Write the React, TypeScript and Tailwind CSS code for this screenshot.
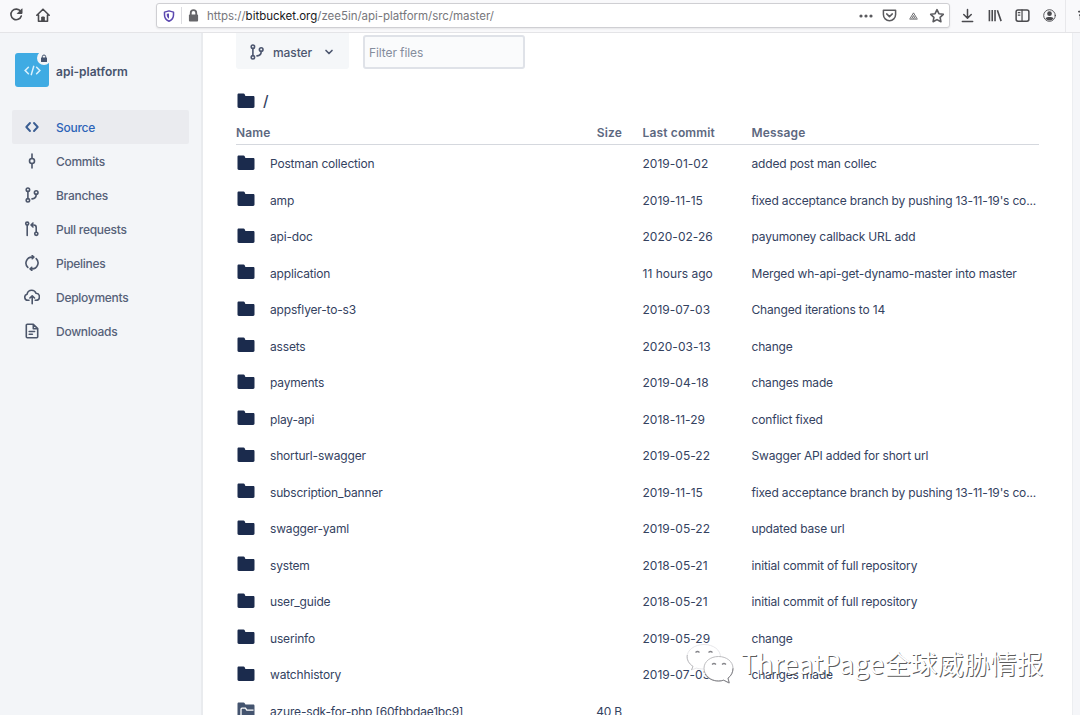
import type { ReactNode } from "react";

type IconProps = { children: ReactNode; className?: string; box?: string };

function Icon({ children, className = "size-4", box = "0 0 16 16" }: IconProps) {
  return (
    <svg
      viewBox={box}
      className={`shrink-0 ${className}`}
      fill="none"
      stroke="currentColor"
      strokeWidth="1.6"
      strokeLinecap="round"
      strokeLinejoin="round"
    >
      {children}
    </svg>
  );
}

const branchShape = (
  <>
    <circle cx="3.9" cy="2.7" r="1.7" />
    <circle cx="3.9" cy="13.3" r="1.7" />
    <circle cx="12.2" cy="5.6" r="1.8" />
    <path d="M3.9 4.6v6.8M12.2 7.4c0 3-1.2 4.200-4.200 4.500" />
  </>
);

const navItems: { label: string; icon: ReactNode; active?: boolean }[] = [
  {
    label: "Source",
    active: true,
    icon: <path d="M6 4 2.3 8 6 12M10 4l3.700 4L10 12" strokeWidth="1.9" />,
  },
  {
    label: "Commits",
    icon: (
      <>
        <circle cx="8" cy="8" r="2.500" />
        <path d="M8 1v4.500M8 10.500V15" />
      </>
    ),
  },
  { label: "Branches", icon: branchShape },
  {
    label: "Pull requests",
    icon: (
      <>
        <circle cx="3.200" cy="2.600" r="1.500" />
        <path d="M3.200 4.400v10.100M7.300 4h2.500c1.600 0 2.400.8 2.400 2.400v4.800M9 2 7 4l2 2" />
        <circle cx="12.300" cy="12.800" r="1.600" />
      </>
    ),
  },
  {
    label: "Pipelines",
    icon: (
      <>
        <path d="M9.500 2.100H8A6 6 0 0 0 3.800 12.400M6.500 13.900H8A6 6 0 0 0 12.200 3.600" />
        <path d="M8.200.6 9.800 2.100 8.200 3.700M7.800 12.300 6.200 13.900l1.600 1.500" />
      </>
    ),
  },
  {
    label: "Deployments",
    icon: (
      <path d="M5 11.300H3.800a3.100 3.100 0 0 1-.7-6.100C3.600 2.700 5.300 1.300 7.700 1.300c2.100 0 3.600 1.100 4.300 3 2.200.1 3.400 1.600 3.400 3.500 0 2.200-1.500 3.500-3.400 3.500h-.8M8.200 14.700V7M5.900 9 8.200 6.800 10.500 9" />
    ),
  },
  {
    label: "Downloads",
    icon: (
      <path d="M9.300 1.200H3.300a1 1 0 0 0-1 1v11.600a1 1 0 0 0 1 1h9.400a1 1 0 0 0 1-1V5.600zM9.300 1.500v4.200h4.200M5.200 8.500h5.400M5.200 11.300h3.200" />
    ),
  },
];

const files = [
  ["Postman collection", "2019-01-02", "added post man collec"],
  ["amp", "2019-11-15", "fixed acceptance branch by pushing 13-11-19's co..."],
  ["api-doc", "2020-02-26", "payumoney callback URL add"],
  ["application", "11 hours ago", "Merged wh-api-get-dynamo-master into master"],
  ["appsflyer-to-s3", "2019-07-03", "Changed iterations to 14"],
  ["assets", "2020-03-13", "change"],
  ["payments", "2019-04-18", "changes made"],
  ["play-api", "2018-11-29", "conflict fixed"],
  ["shorturl-swagger", "2019-05-22", "Swagger API added for short url"],
  ["subscription_banner", "2019-11-15", "fixed acceptance branch by pushing 13-11-19's co..."],
  ["swagger-yaml", "2019-05-22", "updated base url"],
  ["system", "2018-05-21", "initial commit of full repository"],
  ["user_guide", "2018-05-21", "initial commit of full repository"],
  ["userinfo", "2019-05-29", "change"],
  ["watchhistory", "2019-07-03", "changes made"],
];

function Folder() {
  return (
    <svg viewBox="0 0 18 16" className="h-4 w-[18px] shrink-0" fill="#1b2b4d">
      <path d="M.5 1.900C.5 1 1 .5 1.900.5h4.600c.6 0 1 .3 1.200.8l.7 1.700h7.700c.9 0 1.400.5 1.400 1.400v9.200c0 .9-.5 1.400-1.400 1.400H1.900C1 15 .5 14.500.5 13.600z" />
    </svg>
  );
}

function Submodule() {
  return (
    <svg viewBox="0 0 18 16" className="h-4 w-[18px] shrink-0" fill="#44546f">
      <path d="M.5 1.900C.5 1 1 .5 1.900.5h4.600c.6 0 1 .3 1.200.8l.7 1.200h7.700c.9 0 1.400.5 1.400 1.400v9.700c0 .9-.5 1.400-1.400 1.400H1.900C1 15 .5 14.500.5 13.600z" />
      <path d="M4 13V7.200c0-.7.300-1 1-1h3.500l1.300 2h6.700" fill="none" stroke="#fff" strokeWidth="1.300" />
    </svg>
  );
}

function BrowserBar() {
  return (
    <header className="flex h-[33px] shrink-0 items-start border-b border-[#e4e4e7] bg-[#f9f9fb] text-[#4a4a4e]">
      <div className="flex w-[156px] shrink-0 gap-[11px] pt-[7px] pl-2">
        <Icon className="size-4">
          <path d="M12.600 4.400A5.300 5.300 0 1 0 13.300 9" strokeWidth="1.600" />
          <path d="M14 2.200v4.300H9.700z" fill="currentColor" strokeWidth="1" />
        </Icon>
        <Icon className="size-4">
          <path d="M1.800 8.200 8 2.200l6.200 6M3.500 8v6.300h9V8" strokeWidth="1.600" />
          <path d="M6.700 14v-4h2.600v4z" fill="currentColor" strokeWidth="1" />
        </Icon>
      </div>
      <div className="mt-[3px] flex h-[25px] w-[794px] shrink-0 items-center rounded-[3px] border border-[#cfcfd3] bg-white shadow-[0_1px_2px_rgba(0,0,0,0.08)]">
        <Icon className="ml-[6px] size-[12px] text-[#5b48b0]">
          <path d="M8 1.200 14 2.800v4c0 4-2.300 6.700-6 8.200-3.700-1.500-6-4.200-6-8.200v-4z" strokeWidth="2" />
          <path d="M8 4.500v7c-2-1.300-3-3-3-5V5z" fill="currentColor" stroke="none" />
        </Icon>
        <span className="ml-[6px] h-[17px] w-px bg-[#dcdce0]" />
        <svg viewBox="0 0 12 14" className="ml-[6px] h-[13px] w-[11px] shrink-0">
          <path d="M3 7V4.200a3 3 0 0 1 6 0V7" fill="none" stroke="#66666a" strokeWidth="2" />
          <rect x="1" y="6" width="10" height="7.500" rx="1" fill="#66666a" />
        </svg>
        <span className="ml-[8px] flex-1 pt-[2px] text-[11.5px] tracking-[-0.02px] whitespace-nowrap text-[#77777c]">
          https://<span className="text-[#18181b]">bitbucket.org</span>/zee5in/api-platform/src/master/
        </span>
        <div className="flex items-center pr-[4px] text-[#5a5a5e]">
          <svg viewBox="0 0 14 4" className="h-1 w-[14px]" fill="currentColor">
            <circle cx="2" cy="2" r="1.600" />
            <circle cx="7" cy="2" r="1.600" />
            <circle cx="12" cy="2" r="1.600" />
          </svg>
          <Icon className="ml-[9px] size-[15px]">
            <path d="M1.500 2.500h13V7a6.500 6.500 0 0 1-13 0zM5 6.300l3 2.900 3-2.900" />
          </Icon>
          <svg viewBox="0 0 10 9" className="ml-[12px] h-[8px] w-[9px]" fill="none" stroke="currentColor">
            <path d="M1 7.500 5 1l4 6.500M3 7.500 5 4l2 3.500M5 6.500v1M0.500 8h9" strokeWidth="1" />
          </svg>
          <Icon className="ml-[11px] size-[16px]">
            <path d="m8 1.700 1.900 4 4.400.6-3.200 3 .8 4.400L8 11.600l-3.900 2.100.8-4.400-3.200-3 4.400-.6z" />
          </Icon>
        </div>
      </div>
      <div className="flex flex-1 items-start pt-[8px] pl-[10px]">
        <Icon className="size-[15px]">
          <path d="M8 1.500v9M4 7l4 4 4-4M2.500 14.300h11" strokeWidth="1.600" />
        </Icon>
        <Icon className="ml-[13px] size-[15px]">
          <path d="M1.500 2v12M4.500 2v12M7.500 2v12M10 2.500l4 11.500" strokeWidth="1.700" strokeLinecap="butt" />
        </Icon>
        <Icon className="ml-[12px] size-[15px]">
          <rect x="1.200" y="2" width="13.600" height="12" rx="2" />
          <path d="M7.500 2v12M3.500 5h1.700M3.500 7.500h1.700" strokeWidth="1.300" />
        </Icon>
        <Icon className="ml-[12px] size-[15px]">
          <circle cx="8" cy="8" r="6.200" strokeWidth="1" />
          <circle cx="8" cy="6" r="2.500" fill="currentColor" stroke="none" />
          <path d="M3.800 11.200c1-2 7.400-2 8.400 0-1.800 2.800-6.600 2.800-8.400 0z" fill="currentColor" stroke="none" />
        </Icon>
        <span className="-mt-[8px] ml-[8px] h-[32px] w-px bg-[#e8e8eb]" />
        <Icon className="ml-[12px] size-[14px]">
          <path d="M1 4h6M2 8h5M3 8v5" strokeWidth="2" />
        </Icon>
      </div>
    </header>
  );
}

function Sidebar() {
  return (
    <aside className="w-[203px] shrink-0 border-r-2 border-[#e9ebee] bg-[#f3f5f8] pt-[20px] pl-3">
      <div className="flex items-center pl-[3px]">
        <div className="relative flex h-[34px] w-[34px] items-center justify-center rounded-[3px] bg-[#3fabe3]">
          <svg viewBox="0 0 20 12" className="h-[11px] w-[19px]" fill="none" stroke="#d9f1fd" strokeWidth="1.700" strokeLinecap="round">
            <path d="M5.500 2.500 2 6l3.500 3.500M14.500 2.500 18 6l-3.500 3.500M11.300 1.500 8.700 10.500" />
          </svg>
          <span className="absolute -top-[2px] -right-[2px] flex size-[14px] items-center justify-center rounded-full bg-[#f3f5f8]">
            <svg viewBox="0 0 8 9" className="h-[9px] w-[8px]">
              <path d="M2.300 4.500V2.700a1.700 1.700 0 0 1 3.400 0v1.800" fill="none" stroke="#44546f" />
              <rect x="1" y="3.500" width="6" height="4.500" rx=".6" fill="#44546f" />
            </svg>
          </span>
        </div>
        <h1 className="ml-[7px] pt-[3px] text-[12px] font-semibold text-[#47536d]">api-platform</h1>
      </div>
      <nav className="mt-[23px] w-[177px]">
        {navItems.map(({ label, icon, active }) => (
          <a
            key={label}
            className={`flex h-[34px] items-center pl-[12px] text-[12px] font-medium tracking-[-0.28px] ${
              active ? "rounded-[2px] bg-[#eaebef] text-[#2c63b8]" : "text-[#566178]"
            }`}
          >
            <Icon className={`size-4 ${active ? "text-[#3a5d92]" : "text-[#4c566b]"}`}>{icon}</Icon>
            <span className="ml-[16px] pt-[2px]">{label}</span>
          </a>
        ))}
      </nav>
    </aside>
  );
}

const columns = "grid grid-cols-[34px_327px_25px_20.500px_109px_1fr]";

function FileTable() {
  return (
    <div className="w-[803px] text-[12px] tracking-[-0.17px] whitespace-nowrap text-[#34425f]">
      <div className={`${columns} h-[28px] items-center border-b border-[#d5d8de] pt-[5px] font-semibold tracking-[0.15px] text-[#5d6880]`}>
        <span className="col-span-2">Name</span>
        <span className="flex justify-end">Size</span>
        <span />
        <span>Last commit</span>
        <span>Message</span>
      </div>
      <div className="pt-[1px]">
        {files.map(([name, date, message]) => (
          <div key={name} className={`${columns} h-[36.5px] items-center`}>
            <span className="-mt-[3px] pl-[1px]">
              <Folder />
            </span>
            <span>{name}</span>
            <span />
            <span />
            <span className="tracking-[0.02px]">{date}</span>
            <span>{message}</span>
          </div>
        ))}
        <div className={`${columns} h-[36.5px] items-center`}>
          <span className="-mt-[3px] pl-[1px]">
            <Submodule />
          </span>
          <span>azure-sdk-for-php [60fbbdae1bc9]</span>
          <span className="flex justify-end">40 B</span>
        </div>
      </div>
    </div>
  );
}

function Watermark() {
  return (
    <div className="absolute top-[641px] left-[685px] flex items-center">
      <svg viewBox="0 0 50 44" className="h-[44px] w-[50px] shrink-0" fill="#fff" stroke="#b4b4b8" strokeWidth=".9">
        <path d="M19 3.500C9.500 3.500 2 9 2 16c0 4 2.400 7.300 6 9.400L6.500 29l4.800-1.900c2 .6 4.700.9 7.700.9 9 0 16.500-5 16.500-12S28.500 3.500 19 3.500z" stroke="#e4e4e8" />
        <path d="M2.300 14c-.8 4.500 1.800 8.900 5.700 11.400L6.500 29" fill="none" />
        <path d="M33.500 15.500c-8 0-14.500 5-14.500 11.800S25.500 40 33.500 40c1.900 0 3.600-.3 5.200-.8l5.500 2.800-1.200-4.900c3.300-2.200 5-6 5-9.800 0-6.800-6.500-11.800-14.500-11.800z" />
        <path d="M20 33c3 4.500 7.500 7 13.500 7 1.900 0 3.600-.3 5.200-.8l5.500 2.800-1.200-4.900c3.300-2.200 5-6 5-9.800" fill="none" stroke="#85858a" strokeWidth="1" />
        <path d="M10.500 11.500q2-2 4 0M23.500 11.500q2-2 4 0M27 23.500q2-2 4 0M37 23.500q2-2 4 0" fill="none" stroke="#85858a" strokeWidth="1.200" />
      </svg>
      <span className="ml-[6px] font-['Noto_Sans_CJK_SC',sans-serif] text-[26.5px] leading-[44px] whitespace-nowrap text-white [text-shadow:1px_1px_0.5px_rgba(70,70,70,0.9)]">
        <span className="tracking-[0.3px]">ThreatPage</span>全球威胁情报
      </span>
    </div>
  );
}

export default function App() {
  return (
    <div className="relative flex h-[715px] w-[1080px] flex-col overflow-hidden bg-white font-['Inter',sans-serif]">
      <BrowserBar />
      <div className="flex min-h-0 flex-1">
        <Sidebar />
        <main className="min-w-0 flex-1 overflow-hidden pl-[33px]">
          <div className="flex h-[36px] items-stretch gap-[14px]">
            <button className="flex w-[113px] items-center rounded-b-[3px] bg-[#f5f7f9] pt-[2px] pl-[13px] text-[12px] font-medium tracking-[-0.1px] text-[#4c566f]">
              <Icon className="size-4">{branchShape}</Icon>
              <span className="ml-[8px] pt-[2px]">master</span>
              <Icon className="ml-[11px] size-[12px]">
                <path d="m4 6 4 4 4-4" strokeWidth="2.200" />
              </Icon>
            </button>
            <div className="mt-[2px] flex w-[162px] items-center rounded-[3px] border-2 border-[#dfe2e8] bg-[#fafbfc] pt-[2px] pl-[4px] text-[12px] tracking-[-0.1px] text-[#858d9d]">
              Filter files
            </div>
          </div>
          <div className="flex h-[48px] items-end gap-[8px] pb-[8px] pl-[1px]">
            <Folder />
            <span className="text-[15px] leading-[16px] font-medium text-[#34425f]">/</span>
          </div>
          <FileTable />
        </main>
        <div className="w-[8px] shrink-0 border-l border-[#eceef1] bg-[#f5f6f9]" />
      </div>
      <Watermark />
    </div>
  );
}
